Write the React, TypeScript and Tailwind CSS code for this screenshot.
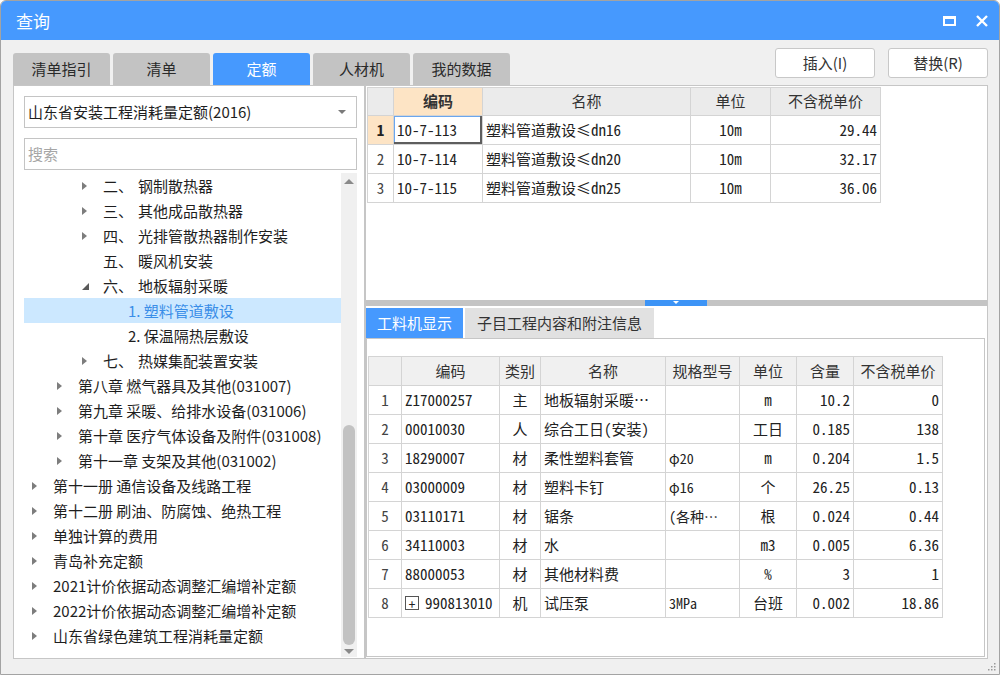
import React from "react";

const ui = "font-['Noto_Sans_CJK_SC','Noto_Sans',sans-serif]";
const mono = "font-['Noto_Sans_Mono_CJK_SC','Liberation_Mono','Noto_Sans_CJK_SC',monospace]";

type TreeItem = { level: number; arrow?: "right" | "down"; pre?: string; text: string; selected?: boolean };

const indent = ["pl-[8px]", "pl-[33px]", "pl-[58px]", "pl-[83px]"];

const tree: TreeItem[] = [
  { level: 2, arrow: "right", pre: "二、", text: "钢制散热器" },
  { level: 2, arrow: "right", pre: "三、", text: "其他成品散热器" },
  { level: 2, arrow: "right", pre: "四、", text: "光排管散热器制作安装" },
  { level: 2, pre: "五、", text: "暖风机安装" },
  { level: 2, arrow: "down", pre: "六、", text: "地板辐射采暖" },
  { level: 3, text: "1. 塑料管道敷设", selected: true },
  { level: 3, text: "2. 保温隔热层敷设" },
  { level: 2, arrow: "right", pre: "七、", text: "热媒集配装置安装" },
  { level: 1, arrow: "right", text: "第八章 燃气器具及其他(031007)" },
  { level: 1, arrow: "right", text: "第九章 采暖、给排水设备(031006)" },
  { level: 1, arrow: "right", text: "第十章 医疗气体设备及附件(031008)" },
  { level: 1, arrow: "right", text: "第十一章 支架及其他(031002)" },
  { level: 0, arrow: "right", text: "第十一册 通信设备及线路工程" },
  { level: 0, arrow: "right", text: "第十二册 刷油、防腐蚀、绝热工程" },
  { level: 0, arrow: "right", text: "单独计算的费用" },
  { level: 0, arrow: "right", text: "青岛补充定额" },
  { level: 0, arrow: "right", text: "2021计价依据动态调整汇编增补定额" },
  { level: 0, arrow: "right", text: "2022计价依据动态调整汇编增补定额" },
  { level: 0, arrow: "right", text: "山东省绿色建筑工程消耗量定额" },
];

const quota = [
  ["10-7-113", "塑料管道敷设≤dn16", "10m", "29.44"],
  ["10-7-114", "塑料管道敷设≤dn20", "10m", "32.17"],
  ["10-7-115", "塑料管道敷设≤dn25", "10m", "36.06"],
];

const materials = [
  ["Z17000257", "主", "地板辐射采暖…", "", "m", "10.2", "0"],
  ["00010030", "人", "综合工日(安装)", "", "工日", "0.185", "138"],
  ["18290007", "材", "柔性塑料套管", "φ20", "m", "0.204", "1.5"],
  ["03000009", "材", "塑料卡钉", "φ16", "个", "26.25", "0.13"],
  ["03110171", "材", "锯条", "(各种…", "根", "0.024", "0.44"],
  ["34110003", "材", "水", "", "m3", "0.005", "6.36"],
  ["88000053", "材", "其他材料费", "", "%", "3", "1"],
  ["990813010", "机", "试压泵", "3MPa", "台班", "0.002", "18.86"],
];

function Arrow({ kind }: { kind?: "right" | "down" }) {
  if (kind === "right")
    return <span className="w-0 h-0 border-y-[4px] border-y-transparent border-l-[5px] border-l-[#7d7d7d]" />;
  if (kind === "down")
    return (
      <svg width="7" height="7" viewBox="0 0 7 7" className="mt-[2px]">
        <path d="M7 0 L7 7 L0 7 Z" fill="#595959" />
      </svg>
    );
  return null;
}

function TitleBar() {
  return (
    <div className="h-[39px] bg-[#4699fe] flex items-center pl-[15px] pr-[11px] text-white">
      <span className="text-[17px] leading-none">查询</span>
      <div className="ml-auto flex items-center gap-[20px]">
        <span className="w-[13px] h-[10px] border-[2px] border-white border-t-[3px]" />
        <svg width="12" height="12" viewBox="0 0 12 12">
          <path d="M1 1 L11 11 M11 1 L1 11" stroke="white" strokeWidth="2.4" />
        </svg>
      </div>
    </div>
  );
}

function LeftPanel() {
  return (
    <div className="w-[352px] h-full border border-[#c6c6c6] bg-white flex flex-col pt-[10px] pl-[10px] pr-[7px] pb-px">
      <div className="h-[32px] border border-[#c4c4c4] flex items-center pl-[3px] pr-[10px] text-[15px] text-[#1e1e1e]">
        <span>山东省安装工程消耗量定额(2016)</span>
        <span className="ml-auto w-0 h-0 border-x-[4px] border-x-transparent border-t-[4px] border-t-[#7a7a7a]" />
      </div>
      <div className="h-[32px] mt-[10px] border border-[#c4c4c4] flex items-center pl-[3px] text-[15px] text-[#a6a6a6]">
        搜索
      </div>
      <div className="flex-1 mt-[3px] flex min-h-0">
        <div className="flex-1">
          {tree.map((t, i) => (
            <div
              key={i}
              className={`h-[25px] flex items-center text-[15px] leading-none ${indent[t.level]} ${
                t.selected ? "bg-[#cce8ff] text-[#3a8ee8]" : "text-[#1e1e1e]"
              }`}
            >
              <span className="w-[21px] flex items-center">
                <Arrow kind={t.arrow} />
              </span>
              {t.pre && <span className="w-[35px]">{t.pre}</span>}
              <span className="whitespace-nowrap">{t.text}</span>
            </div>
          ))}
        </div>
        <div className="w-[16px] bg-[#f0f0f0] flex flex-col items-center">
          <div className="h-[16px] flex items-center justify-center">
            <span className="w-0 h-0 border-x-[5px] border-x-transparent border-b-[5px] border-b-[#8a8a8a]" />
          </div>
          <div className="flex-1" />
          <div className="w-[12px] h-[220px] rounded-full bg-[#c2c2c2]" />
          <div className="h-[12px] flex items-center justify-center">
            <span className="w-0 h-0 border-x-[5px] border-x-transparent border-t-[5px] border-t-[#8a8a8a]" />
          </div>
        </div>
      </div>
    </div>
  );
}

const q1 = ["w-[26px]", "w-[89px]", "w-[208px]", "w-[80px]", "w-[110px]"];
const q2 = ["w-[33px]", "w-[98px]", "w-[41px]", "w-[125px]", "w-[74px]", "w-[57px]", "w-[57px]", "w-[89px]"];
const cell = "border-r border-b border-[#d4d4d4] flex items-center shrink-0";

function QuotaGrid() {
  const heads = ["", "编码", "名称", "单位", "不含税单价"];
  return (
    <div className="ml-px mt-px w-fit border-l border-t border-[#d4d4d4]">
      <div className="flex h-[28px] text-[15px] text-[#333]">
        {heads.map((h, i) => (
          <div
            key={i}
            className={`${cell} ${q1[i]} justify-center ${i === 1 ? "bg-[#fde4c5] font-bold" : "bg-[#ebebeb]"}`}
          >
            {h}
          </div>
        ))}
      </div>
      {quota.map((r, ri) => (
        <div key={ri} className={`flex h-[29px] text-[15px] text-[#222] ${mono}`}>
          <div className={`${cell} ${q1[0]} justify-center ${ri === 0 ? "bg-[#fde4c5] font-bold" : "bg-white text-[#444]"}`}>
            {ri + 1}
          </div>
          <div
            className={`${cell} ${q1[1]} pl-[3px] ${
              ri === 0 ? "shadow-[inset_-2px_-2px_0_#5e5e5e,inset_1px_1px_0_#6aa6ee]" : ""
            }`}
          >
            {r[0]}
          </div>
          <div className={`${cell} ${q1[2]} pl-[3px]`}>{r[1]}</div>
          <div className={`${cell} ${q1[3]} justify-center`}>{r[2]}</div>
          <div className={`${cell} ${q1[4]} justify-end pr-[3px]`}>{r[3]}</div>
        </div>
      ))}
    </div>
  );
}

function MaterialGrid() {
  const heads = ["", "编码", "类别", "名称", "规格型号", "单位", "含量", "不含税单价"];
  return (
    <div className="ml-px w-fit border-l border-t border-[#d4d4d4]">
      <div className="flex h-[29px] text-[15px] text-[#333] bg-[#f0f0f0]">
        {heads.map((h, i) => (
          <div key={i} className={`${cell} ${q2[i]} justify-center`}>
            {h}
          </div>
        ))}
      </div>
      {materials.map((r, ri) => (
        <div key={ri} className={`flex h-[29px] text-[15px] text-[#222] bg-white ${mono}`}>
          <div className={`${cell} ${q2[0]} justify-center text-[#444]`}>{ri + 1}</div>
          <div className={`${cell} ${q2[1]} pl-[3px] whitespace-nowrap`}>
            {ri === 7 && (
              <span className="w-[14px] h-[14px] border border-[#555] mr-[6px] flex items-center justify-center text-[13px] leading-none">
                +
              </span>
            )}
            {r[0]}
          </div>
          <div className={`${cell} ${q2[2]} justify-center`}>{r[1]}</div>
          <div className={`${cell} ${q2[3]} pl-[3px] whitespace-nowrap`}>{r[2]}</div>
          <div className={`${cell} ${q2[4]} pl-[3px] whitespace-nowrap text-[14px]`}>{r[3]}</div>
          <div className={`${cell} ${q2[5]} justify-center`}>{r[4]}</div>
          <div className={`${cell} ${q2[6]} justify-end pr-[3px]`}>{r[5]}</div>
          <div className={`${cell} ${q2[7]} justify-end pr-[3px]`}>{r[6]}</div>
        </div>
      ))}
    </div>
  );
}

function RightPanel() {
  return (
    <div className="w-[623px] h-full border border-[#c6c6c6] bg-white flex flex-col">
      <div className="h-[214px]">
        <QuotaGrid />
      </div>
      <div className="h-[6px] bg-[#c4c4c4] flex">
        <div className="ml-[279px] w-[62px] h-full bg-[#3d94f6] flex justify-center items-start pt-[1px]">
          <span className="w-0 h-0 border-x-[3px] border-x-transparent border-t-[3px] border-t-white" />
        </div>
      </div>
      <div className="h-[32px] flex items-end gap-[2px] text-[15px]">
        <div className="w-[97px] h-[30px] bg-[#4699fe] text-white flex items-center justify-center">工料机显示</div>
        <div className="w-[189px] h-[30px] bg-[#e1e1e1] text-[#333] flex items-center justify-center">
          子目工程内容和附注信息
        </div>
      </div>
      <div className="flex-1 mr-[2px] mb-px border border-[#c6c6c6] pt-[17px]">
        <MaterialGrid />
      </div>
    </div>
  );
}

export default function App() {
  const tabs = ["清单指引", "清单", "定额", "人材机", "我的数据"];
  return (
    <div className={`w-[1000px] h-[675px] flex flex-col bg-[#f0f0f0] border border-[#a3a3a3] rounded-t-[6px] overflow-hidden ${ui}`}>
      <TitleBar />
      <div className="h-[45px] flex pl-[12px] pr-[11px]">
        <div className="flex items-end gap-[3px]">
          {tabs.map((t, i) => (
            <div
              key={t}
              className={`w-[97px] h-[32px] rounded-t-[3px] flex items-center justify-center text-[15px] ${
                i === 2 ? "bg-[#4699fe] text-white" : "bg-[#c3c3c3] text-[#2a2a2a]"
              }`}
            >
              {t}
            </div>
          ))}
        </div>
        <div className="ml-auto flex gap-[13px] pt-[8px]">
          {["插入(I)", "替换(R)"].map((b) => (
            <div
              key={b}
              className="w-[100px] h-[30px] bg-white border border-[#c8c8c8] rounded-[3px] flex items-center justify-center text-[15px] text-[#333]"
            >
              {b}
            </div>
          ))}
        </div>
      </div>
      <div className="h-[574px] flex pl-[12px]">
        <LeftPanel />
        <RightPanel />
      </div>
      <div className="flex-1 flex justify-end items-end pr-[3px] pb-[3px]">
        <svg width="10" height="10" viewBox="0 0 10 10">
          {[
            [8, 2],
            [8, 5],
            [5, 5],
            [8, 8],
            [5, 8],
            [2, 8],
          ].map(([x, y], i) => (
            <rect key={i} x={x} y={y} width="1.5" height="1.5" fill="#9a9a9a" />
          ))}
        </svg>
      </div>
    </div>
  );
}
